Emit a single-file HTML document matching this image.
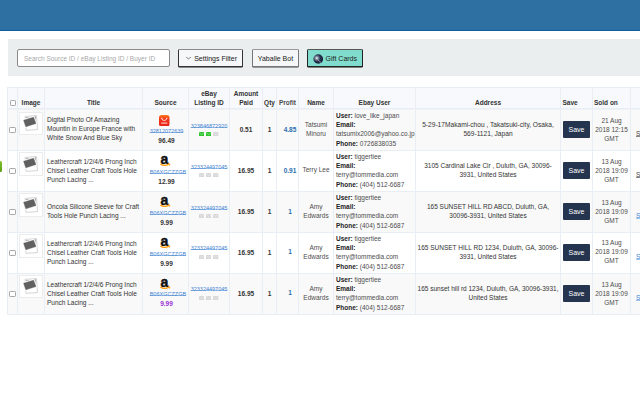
<!DOCTYPE html><html><head><meta charset="utf-8"><style>
*{margin:0;padding:0;box-sizing:border-box}
html,body{width:640px;height:400px;overflow:hidden;background:#fff;font-family:"Liberation Sans",sans-serif;color:#333}
.a{position:absolute}
.t{position:absolute;font-size:6.5px;line-height:9px;white-space:nowrap}
.b{font-weight:bold}
.g{color:#4d4d4d}
.lk{font-size:5.5px;color:#3f84d3;text-decoration:underline;text-decoration-color:#9fc2ea;text-decoration-skip-ink:none;text-underline-offset:-0.6px}
.hdr{position:absolute;left:0;top:0;width:640px;height:30.5px;background:#2e70a1;border-bottom:1px solid #0d5c9e}
.panel{position:absolute;left:8px;top:39.2px;width:640px;height:37.3px;background:#ebeeef}
.inp{position:absolute;left:17px;top:49px;width:152.5px;height:17.5px;border:1px solid #8a8a8a;border-radius:2px;background:#fff}
.btn{position:absolute;top:49.3px;height:17.3px;border:1px solid #333;border-radius:1.5px;background:#f6f7f8;font-size:7px;line-height:15px;text-align:center;color:#222;white-space:nowrap}
.cb{position:absolute;width:6.3px;height:5.5px;border:0.7px solid #a8a8a8;border-radius:1.2px;background:#fff}
.thumb{position:absolute;width:23.5px;height:23.7px;border:1px solid #ececec;background:#fff}
.save{position:absolute;left:563px;width:27px;height:17px;background:#26354f;border-radius:1px;color:#fff;font-size:7px;line-height:17px;text-align:center}
.env{position:absolute;width:5.3px;height:4.3px;border-radius:0.5px}
</style></head><body>
<div class="hdr"></div>
<div class="panel"></div>
<div class="inp"></div>
<div class="t " style="left:24px;top:53.5px;width:140px;text-align:left;color:#a8a8a8;">Search Source ID / eBay Listing ID / Buyer ID</div>
<div class="btn" style="left:178px;width:64.5px;border-top-color:#8a8a8a;box-shadow:0 0.6px 0 #222;"></div>
<svg class="a" style="left:185px;top:55px" width="7" height="5" viewBox="0 0 7 5"><polyline points="1.2,2.2 3.5,3.8 5.9,2.2" fill="none" stroke="#555" stroke-width="0.7"/></svg>
<div class="t " style="left:194.2px;top:53.5px;width:50px;text-align:left;font-size:7px;color:#222;">Settings Filter</div>
<div class="btn" style="left:251.5px;width:47px;border-color:#777;border-top-color:#999;box-shadow:0 0.6px 0 #444;background:#f5f6f7"></div>
<div class="t " style="left:257.8px;top:53.5px;width:40px;text-align:left;font-size:7px;color:#222;">Yaballe Bot</div>
<div class="btn" style="left:307px;width:56px;background:#80dccc;border-color:#222;border-top-color:#555;box-shadow:0 0.6px 0 #111;"></div>
<svg class="a" style="left:312.5px;top:53.5px" width="10.5" height="10" viewBox="0 0 21 20"><defs><radialGradient id="gc" cx="0.35" cy="0.4" r="0.6"><stop offset="0" stop-color="#ffffff"/><stop offset="0.25" stop-color="#8a93a6"/><stop offset="0.6" stop-color="#26324f"/><stop offset="1" stop-color="#1b2540"/></radialGradient></defs><ellipse cx="10.5" cy="10" rx="9.8" ry="9.3" fill="url(#gc)"/><path d="M9 11 L16 17" stroke="#e8e8e8" stroke-width="1.3" opacity="0.8"/></svg>
<div class="t " style="left:325.5px;top:53.5px;width:40px;text-align:left;font-size:7px;color:#222;">Gift Cards</div>
<div class="a" style="left:7.5px;top:87px;width:652.5px;height:21.5px;background:#f7f9fc"></div>
<div class="a" style="left:7.5px;top:108.5px;width:652.5px;height:42.0px;background:#f9f9f9"></div>
<div class="a" style="left:7.5px;top:150.5px;width:652.5px;height:41.0px;background:#ffffff"></div>
<div class="a" style="left:7.5px;top:191.5px;width:652.5px;height:41.0px;background:#f9f9f9"></div>
<div class="a" style="left:7.5px;top:232.5px;width:652.5px;height:40.5px;background:#ffffff"></div>
<div class="a" style="left:7.5px;top:273px;width:652.5px;height:41.80000000000001px;background:#f9f9f9"></div>
<div class="a" style="left:7.0px;top:87px;width:1px;height:227.8px;background:#e9edf4"></div>
<div class="a" style="left:17.0px;top:87px;width:1px;height:227.8px;background:#e9edf4"></div>
<div class="a" style="left:44.0px;top:87px;width:1px;height:227.8px;background:#e9edf4"></div>
<div class="a" style="left:142.0px;top:87px;width:1px;height:227.8px;background:#e9edf4"></div>
<div class="a" style="left:188.0px;top:87px;width:1px;height:227.8px;background:#e9edf4"></div>
<div class="a" style="left:229.0px;top:87px;width:1px;height:227.8px;background:#e9edf4"></div>
<div class="a" style="left:262.0px;top:87px;width:1px;height:227.8px;background:#e9edf4"></div>
<div class="a" style="left:276.0px;top:87px;width:1px;height:227.8px;background:#e9edf4"></div>
<div class="a" style="left:298.0px;top:87px;width:1px;height:227.8px;background:#e9edf4"></div>
<div class="a" style="left:333.0px;top:87px;width:1px;height:227.8px;background:#e9edf4"></div>
<div class="a" style="left:415.0px;top:87px;width:1px;height:227.8px;background:#e9edf4"></div>
<div class="a" style="left:560.0px;top:87px;width:1px;height:227.8px;background:#e9edf4"></div>
<div class="a" style="left:592.0px;top:87px;width:1px;height:227.8px;background:#e9edf4"></div>
<div class="a" style="left:630.0px;top:87px;width:1px;height:227.8px;background:#e9edf4"></div>
<div class="a" style="left:7.5px;top:109px;width:652.5px;height:1px;background:#eef1f6"></div>
<div class="a" style="left:7.5px;top:86.5px;width:652.5px;height:1px;background:#e9edf4"></div>
<div class="a" style="left:7.5px;top:108.0px;width:652.5px;height:1px;background:#e9edf4"></div>
<div class="a" style="left:7.5px;top:150.0px;width:652.5px;height:1px;background:#e9edf4"></div>
<div class="a" style="left:7.5px;top:191.0px;width:652.5px;height:1px;background:#e9edf4"></div>
<div class="a" style="left:7.5px;top:232.0px;width:652.5px;height:1px;background:#e9edf4"></div>
<div class="a" style="left:7.5px;top:272.5px;width:652.5px;height:1px;background:#e9edf4"></div>
<div class="a" style="left:7.5px;top:314.3px;width:652.5px;height:1px;background:#e9edf4"></div>
<div class="cb" style="left:9.5px;top:100px"></div>
<div class="t b" style="left:17.5px;top:98.3px;width:27.0px;text-align:center;">Image</div>
<div class="t b" style="left:44.5px;top:98.3px;width:98.0px;text-align:center;">Title</div>
<div class="t b" style="left:142.5px;top:98.3px;width:46.0px;text-align:center;">Source</div>
<div class="t b" style="left:188.5px;top:89.3px;width:41.0px;text-align:center;">eBay<br>Listing ID</div>
<div class="t b" style="left:229.5px;top:89.3px;width:33.0px;text-align:center;">Amount<br>Paid</div>
<div class="t b" style="left:262.5px;top:98.3px;width:14.0px;text-align:center;">Qty</div>
<div class="t b g" style="left:276.5px;top:98.3px;width:22.0px;text-align:center;">Profit</div>
<div class="t b" style="left:298.5px;top:98.3px;width:35.0px;text-align:center;">Name</div>
<div class="t b" style="left:333.5px;top:98.3px;width:82.0px;text-align:center;">Ebay User</div>
<div class="t b" style="left:415.5px;top:98.3px;width:145.0px;text-align:center;">Address</div>
<div class="t b" style="left:562.5px;top:98.3px;width:30px;text-align:left;">Save</div>
<div class="t b" style="left:594.0px;top:98.3px;width:40px;text-align:left;">Sold on</div>
<div class="cb" style="left:9.3px;top:127.4px"></div>
<div class="thumb" style="left:19px;top:111.8px"></div><svg class="a" style="left:20px;top:112.05px" width="22" height="22" viewBox="0 0 22 22"><g transform="rotate(-4 11 11)"><rect x="5.5" y="4" width="11.5" height="14" fill="#fff" stroke="#c4c4c4" stroke-width="0.7"/><rect x="6.3" y="4.8" width="10" height="2" fill="#9a9a9a"/><rect x="15" y="4.8" width="1.3" height="7" fill="#aaa"/></g><polygon points="3.6,8.25 13.5,5.2 16,11.5 5.8,14.85" fill="#fff" stroke="#fff" stroke-width="2.4" stroke-linejoin="round"/><polygon points="3.6,8.25 13.5,5.2 16,11.5 5.8,14.85" fill="#606060" stroke="#555" stroke-width="0.4" stroke-linejoin="round"/></svg>
<div class="t " style="left:47.0px;top:115.4px;width:98px;text-align:left;">Digital Photo Of Amazing<br>Mountin in Europe France with<br>White Snow And Blue Sky</div>
<svg class="a" style="left:159.2px;top:114.5px" width="10.5" height="11.5" viewBox="0 0 21 23"><defs><linearGradient id="ag" x1="0" y1="0" x2="0" y2="1"><stop offset="0" stop-color="#ff7a1a"/><stop offset="0.35" stop-color="#f2361c"/><stop offset="1" stop-color="#e8231a"/></linearGradient></defs><rect x="0" y="0" width="21" height="23" rx="5" fill="url(#ag)"/><path d="M5.5 6.5 Q6 11 10.5 11 Q15 11 15.5 6.5" fill="none" stroke="#fff" stroke-width="1.6"/><circle cx="5.5" cy="6.5" r="1.1" fill="#fff"/><circle cx="15.5" cy="6.5" r="1.1" fill="#fff"/><rect x="4.5" y="15" width="12" height="2.4" fill="#fff" opacity="0.7"/></svg>
<div class="t lk" style="left:143.5px;top:127.0px;width:46.0px;text-align:center;">32812072639</div>
<div class="t b" style="left:143.5px;top:135.5px;width:46.0px;text-align:center;">96.49</div>
<div class="t lk" style="left:188.5px;top:121.5px;width:41.0px;text-align:center;">323846872920</div>
<svg class="a" style="left:198.8px;top:132.0px" width="5.4" height="4.4" viewBox="0 0 54 44"><rect width="54" height="44" rx="4" fill="#2fc52f"/><path d="M5 8 L27 26 L49 8" fill="none" stroke="#fff" stroke-opacity="0.75" stroke-width="5"/></svg>
<svg class="a" style="left:206.0px;top:132.0px" width="5.4" height="4.4" viewBox="0 0 54 44"><rect width="54" height="44" rx="4" fill="#2fc52f"/><path d="M5 8 L27 26 L49 8" fill="none" stroke="#fff" stroke-opacity="0.75" stroke-width="5"/></svg>
<svg class="a" style="left:213.20000000000002px;top:132.0px" width="5.4" height="4.4" viewBox="0 0 54 44"><rect width="54" height="44" rx="4" fill="#d8d8d8"/><path d="M5 8 L27 26 L49 8" fill="none" stroke="#fff" stroke-opacity="0.75" stroke-width="5"/></svg>
<div class="t b" style="left:229.5px;top:125.0px;width:33.0px;text-align:center;">0.51</div>
<div class="t b" style="left:262.5px;top:125.0px;width:14.0px;text-align:center;">1</div>
<div class="t b" style="left:279.0px;top:124.5px;width:22.0px;text-align:center;color:#2a6eae;">4.85</div>
<div class="t g" style="left:298.5px;top:119.9px;width:35.0px;text-align:center;">Tatsumi<br>Minoru</div>
<div class="t " style="left:336.0px;top:110.9px;width:80px;text-align:left;"><div style="line-height:9.3px"><b style="color:#222">User:</b> <span class="g">love_like_japan</span><br><b style="color:#222">Email:</b><br><span class="g">tatsumix2006@yahoo.co.jp</span><br><b style="color:#222">Phone:</b> <span class="g">0726838035</span></div></div>
<div class="t " style="left:415.5px;top:119.8px;width:145.0px;text-align:center;font-size:6.62px;">5-29-17Makami-chou , Takatsuki-city, Osaka,<br>569-1121, Japan</div>
<div class="save" style="top:121.0px">Save</div>
<div class="t g" style="left:592.5px;top:115.7px;width:38.0px;text-align:center;">21 Aug<br>2018 12:15<br>GMT</div>
<div class="t lk" style="left:636.0px;top:129.4px;width:20px;text-align:left;color:#444;text-decoration-color:#888;font-size:6.5px;text-underline-offset:0.3px;">See</div>
<div class="cb" style="left:9.3px;top:168.4px"></div>
<div class="thumb" style="left:19px;top:152.3px"></div><svg class="a" style="left:20px;top:152.55px" width="22" height="22" viewBox="0 0 22 22"><g transform="rotate(-4 11 11)"><rect x="5.5" y="4" width="11.5" height="14" fill="#fff" stroke="#c4c4c4" stroke-width="0.7"/><rect x="6.3" y="4.8" width="10" height="2" fill="#9a9a9a"/><rect x="15" y="4.8" width="1.3" height="7" fill="#aaa"/></g><polygon points="3.6,8.25 13.5,5.2 16,11.5 5.8,14.85" fill="#fff" stroke="#fff" stroke-width="2.4" stroke-linejoin="round"/><polygon points="3.6,8.25 13.5,5.2 16,11.5 5.8,14.85" fill="#606060" stroke="#555" stroke-width="0.4" stroke-linejoin="round"/></svg>
<div class="t " style="left:47.0px;top:157.2px;width:98px;text-align:left;">Leathercraft 1/2/4/6 Prong Inch<br>Chisel Leather Craft Tools Hole<br>Punch Lacing ...</div>
<svg class="a" style="left:158px;top:154.1px" width="14" height="14" viewBox="0 0 14 14"><text x="6.3" y="10.2" text-anchor="middle" font-family="Liberation Sans" font-weight="bold" font-size="14" fill="#111" stroke="#111" stroke-width="0.5">a</text><path d="M2.3 10.2 Q6.5 12.6 11 10.3" fill="none" stroke="#f90" stroke-width="1.2"/><path d="M10 9.6 L11.8 10 L11.5 11.6" fill="none" stroke="#f90" stroke-width="0.9"/></svg>
<div class="t lk" style="left:144.9px;top:167.5px;width:46.0px;text-align:center;">B06XGCZZGB</div>
<div class="t b" style="left:143.5px;top:176.5px;width:46.0px;text-align:center;">12.99</div>
<div class="t lk" style="left:188.5px;top:162.5px;width:41.0px;text-align:center;">323324497045</div>
<svg class="a" style="left:198.8px;top:173.0px" width="5.4" height="4.4" viewBox="0 0 54 44"><rect width="54" height="44" rx="4" fill="#d8d8d8"/><path d="M5 8 L27 26 L49 8" fill="none" stroke="#fff" stroke-opacity="0.75" stroke-width="5"/></svg>
<svg class="a" style="left:206.0px;top:173.0px" width="5.4" height="4.4" viewBox="0 0 54 44"><rect width="54" height="44" rx="4" fill="#d8d8d8"/><path d="M5 8 L27 26 L49 8" fill="none" stroke="#fff" stroke-opacity="0.75" stroke-width="5"/></svg>
<svg class="a" style="left:213.20000000000002px;top:173.0px" width="5.4" height="4.4" viewBox="0 0 54 44"><rect width="54" height="44" rx="4" fill="#d8d8d8"/><path d="M5 8 L27 26 L49 8" fill="none" stroke="#fff" stroke-opacity="0.75" stroke-width="5"/></svg>
<div class="t b" style="left:229.5px;top:166.0px;width:33.0px;text-align:center;">16.95</div>
<div class="t b" style="left:262.5px;top:166.0px;width:14.0px;text-align:center;">1</div>
<div class="t b" style="left:279.0px;top:165.5px;width:22.0px;text-align:center;color:#2a6eae;">0.91</div>
<div class="t g" style="left:298.5px;top:165.4px;width:35.0px;text-align:center;">Terry Lee</div>
<div class="t " style="left:336.0px;top:151.9px;width:80px;text-align:left;"><div style="line-height:9.3px"><b style="color:#222">User:</b> <span class="g">tiggertiee</span><br><b style="color:#222">Email:</b><br><span class="g">terry@tommedia.com</span><br><b style="color:#222">Phone:</b> <span class="g">(404) 512-6687</span></div></div>
<div class="t " style="left:415.5px;top:160.8px;width:145.0px;text-align:center;font-size:6.5px;">3105 Cardinal Lake Cir , Duluth, GA, 30096-<br>3931, United States</div>
<div class="save" style="top:162.0px">Save</div>
<div class="t g" style="left:592.5px;top:156.7px;width:38.0px;text-align:center;">13 Aug<br>2018 19:09<br>GMT</div>
<div class="t lk" style="left:636.0px;top:170.4px;width:20px;text-align:left;color:#444;text-decoration-color:#888;font-size:6.5px;text-underline-offset:0.3px;">See</div>
<div class="cb" style="left:9.3px;top:209.4px"></div>
<div class="thumb" style="left:19px;top:193.3px"></div><svg class="a" style="left:20px;top:193.55px" width="22" height="22" viewBox="0 0 22 22"><g transform="rotate(-4 11 11)"><rect x="5.5" y="4" width="11.5" height="14" fill="#fff" stroke="#c4c4c4" stroke-width="0.7"/><rect x="6.3" y="4.8" width="10" height="2" fill="#9a9a9a"/><rect x="15" y="4.8" width="1.3" height="7" fill="#aaa"/></g><polygon points="3.6,8.25 13.5,5.2 16,11.5 5.8,14.85" fill="#fff" stroke="#fff" stroke-width="2.4" stroke-linejoin="round"/><polygon points="3.6,8.25 13.5,5.2 16,11.5 5.8,14.85" fill="#606060" stroke="#555" stroke-width="0.4" stroke-linejoin="round"/></svg>
<div class="t " style="left:47.0px;top:201.9px;width:98px;text-align:left;">Oncola Silicone Sleeve for Craft<br>Tools Hole Punch Lacing ...</div>
<svg class="a" style="left:158px;top:195.1px" width="14" height="14" viewBox="0 0 14 14"><text x="6.3" y="10.2" text-anchor="middle" font-family="Liberation Sans" font-weight="bold" font-size="14" fill="#111" stroke="#111" stroke-width="0.5">a</text><path d="M2.3 10.2 Q6.5 12.6 11 10.3" fill="none" stroke="#f90" stroke-width="1.2"/><path d="M10 9.6 L11.8 10 L11.5 11.6" fill="none" stroke="#f90" stroke-width="0.9"/></svg>
<div class="t lk" style="left:144.9px;top:208.5px;width:46.0px;text-align:center;">B06XGCZZGB</div>
<div class="t b" style="left:143.5px;top:217.5px;width:46.0px;text-align:center;">9.99</div>
<div class="t lk" style="left:188.5px;top:203.5px;width:41.0px;text-align:center;">323324497045</div>
<svg class="a" style="left:198.8px;top:214.0px" width="5.4" height="4.4" viewBox="0 0 54 44"><rect width="54" height="44" rx="4" fill="#d8d8d8"/><path d="M5 8 L27 26 L49 8" fill="none" stroke="#fff" stroke-opacity="0.75" stroke-width="5"/></svg>
<svg class="a" style="left:206.0px;top:214.0px" width="5.4" height="4.4" viewBox="0 0 54 44"><rect width="54" height="44" rx="4" fill="#d8d8d8"/><path d="M5 8 L27 26 L49 8" fill="none" stroke="#fff" stroke-opacity="0.75" stroke-width="5"/></svg>
<svg class="a" style="left:213.20000000000002px;top:214.0px" width="5.4" height="4.4" viewBox="0 0 54 44"><rect width="54" height="44" rx="4" fill="#d8d8d8"/><path d="M5 8 L27 26 L49 8" fill="none" stroke="#fff" stroke-opacity="0.75" stroke-width="5"/></svg>
<div class="t b" style="left:229.5px;top:207.0px;width:33.0px;text-align:center;">16.95</div>
<div class="t b" style="left:262.5px;top:207.0px;width:14.0px;text-align:center;">1</div>
<div class="t b" style="left:279.0px;top:206.5px;width:22.0px;text-align:center;color:#2a6eae;">1</div>
<div class="t g" style="left:298.5px;top:201.9px;width:35.0px;text-align:center;">Amy<br>Edwards</div>
<div class="t " style="left:336.0px;top:192.9px;width:80px;text-align:left;"><div style="line-height:9.3px"><b style="color:#222">User:</b> <span class="g">tiggertiee</span><br><b style="color:#222">Email:</b><br><span class="g">terry@tommedia.com</span><br><b style="color:#222">Phone:</b> <span class="g">(404) 512-6687</span></div></div>
<div class="t " style="left:415.5px;top:201.8px;width:145.0px;text-align:center;font-size:6.5px;">165 SUNSET HILL RD ABCD, Duluth, GA,<br>30096-3931, United States</div>
<div class="save" style="top:203.0px">Save</div>
<div class="t g" style="left:592.5px;top:197.7px;width:38.0px;text-align:center;">13 Aug<br>2018 19:09<br>GMT</div>
<div class="t lk" style="left:636.0px;top:211.4px;width:20px;text-align:left;font-size:6.5px;text-underline-offset:0.3px;">See</div>
<div class="cb" style="left:9.3px;top:250.15px"></div>
<div class="thumb" style="left:19px;top:234.3px"></div><svg class="a" style="left:20px;top:234.55px" width="22" height="22" viewBox="0 0 22 22"><g transform="rotate(-4 11 11)"><rect x="5.5" y="4" width="11.5" height="14" fill="#fff" stroke="#c4c4c4" stroke-width="0.7"/><rect x="6.3" y="4.8" width="10" height="2" fill="#9a9a9a"/><rect x="15" y="4.8" width="1.3" height="7" fill="#aaa"/></g><polygon points="3.6,8.25 13.5,5.2 16,11.5 5.8,14.85" fill="#fff" stroke="#fff" stroke-width="2.4" stroke-linejoin="round"/><polygon points="3.6,8.25 13.5,5.2 16,11.5 5.8,14.85" fill="#606060" stroke="#555" stroke-width="0.4" stroke-linejoin="round"/></svg>
<div class="t " style="left:47.0px;top:238.95px;width:98px;text-align:left;">Leathercraft 1/2/4/6 Prong Inch<br>Chisel Leather Craft Tools Hole<br>Punch Lacing ...</div>
<svg class="a" style="left:158px;top:236.1px" width="14" height="14" viewBox="0 0 14 14"><text x="6.3" y="10.2" text-anchor="middle" font-family="Liberation Sans" font-weight="bold" font-size="14" fill="#111" stroke="#111" stroke-width="0.5">a</text><path d="M2.3 10.2 Q6.5 12.6 11 10.3" fill="none" stroke="#f90" stroke-width="1.2"/><path d="M10 9.6 L11.8 10 L11.5 11.6" fill="none" stroke="#f90" stroke-width="0.9"/></svg>
<div class="t lk" style="left:144.9px;top:249.5px;width:46.0px;text-align:center;">B06XGCZZGB</div>
<div class="t b" style="left:143.5px;top:258.5px;width:46.0px;text-align:center;">9.99</div>
<div class="t lk" style="left:188.5px;top:244.25px;width:41.0px;text-align:center;">323324497045</div>
<svg class="a" style="left:198.8px;top:254.75px" width="5.4" height="4.4" viewBox="0 0 54 44"><rect width="54" height="44" rx="4" fill="#d8d8d8"/><path d="M5 8 L27 26 L49 8" fill="none" stroke="#fff" stroke-opacity="0.75" stroke-width="5"/></svg>
<svg class="a" style="left:206.0px;top:254.75px" width="5.4" height="4.4" viewBox="0 0 54 44"><rect width="54" height="44" rx="4" fill="#d8d8d8"/><path d="M5 8 L27 26 L49 8" fill="none" stroke="#fff" stroke-opacity="0.75" stroke-width="5"/></svg>
<svg class="a" style="left:213.20000000000002px;top:254.75px" width="5.4" height="4.4" viewBox="0 0 54 44"><rect width="54" height="44" rx="4" fill="#d8d8d8"/><path d="M5 8 L27 26 L49 8" fill="none" stroke="#fff" stroke-opacity="0.75" stroke-width="5"/></svg>
<div class="t b" style="left:229.5px;top:247.75px;width:33.0px;text-align:center;">16.95</div>
<div class="t b" style="left:262.5px;top:247.75px;width:14.0px;text-align:center;">1</div>
<div class="t b" style="left:279.0px;top:247.25px;width:22.0px;text-align:center;color:#2a6eae;">1</div>
<div class="t g" style="left:298.5px;top:242.65px;width:35.0px;text-align:center;">Amy<br>Edwards</div>
<div class="t " style="left:336.0px;top:233.65px;width:80px;text-align:left;"><div style="line-height:9.3px"><b style="color:#222">User:</b> <span class="g">tiggertiee</span><br><b style="color:#222">Email:</b><br><span class="g">terry@tommedia.com</span><br><b style="color:#222">Phone:</b> <span class="g">(404) 512-6687</span></div></div>
<div class="t " style="left:415.5px;top:242.55px;width:145.0px;text-align:center;font-size:6.5px;">165 SUNSET HILL RD 1234, Duluth, GA, 30096-<br>3931, United States</div>
<div class="save" style="top:243.75px">Save</div>
<div class="t g" style="left:592.5px;top:238.45px;width:38.0px;text-align:center;">13 Aug<br>2018 19:09<br>GMT</div>
<div class="t lk" style="left:636.0px;top:252.15px;width:20px;text-align:left;font-size:6.5px;text-underline-offset:0.3px;">See</div>
<div class="cb" style="left:9.3px;top:291.29999999999995px"></div>
<div class="thumb" style="left:19px;top:274.8px"></div><svg class="a" style="left:20px;top:275.05px" width="22" height="22" viewBox="0 0 22 22"><g transform="rotate(-4 11 11)"><rect x="5.5" y="4" width="11.5" height="14" fill="#fff" stroke="#c4c4c4" stroke-width="0.7"/><rect x="6.3" y="4.8" width="10" height="2" fill="#9a9a9a"/><rect x="15" y="4.8" width="1.3" height="7" fill="#aaa"/></g><polygon points="3.6,8.25 13.5,5.2 16,11.5 5.8,14.85" fill="#fff" stroke="#fff" stroke-width="2.4" stroke-linejoin="round"/><polygon points="3.6,8.25 13.5,5.2 16,11.5 5.8,14.85" fill="#606060" stroke="#555" stroke-width="0.4" stroke-linejoin="round"/></svg>
<div class="t " style="left:47.0px;top:280.09999999999997px;width:98px;text-align:left;">Leathercraft 1/2/4/6 Prong Inch<br>Chisel Leather Craft Tools Hole<br>Punch Lacing ...</div>
<svg class="a" style="left:158px;top:276.6px" width="14" height="14" viewBox="0 0 14 14"><text x="6.3" y="10.2" text-anchor="middle" font-family="Liberation Sans" font-weight="bold" font-size="14" fill="#111" stroke="#111" stroke-width="0.5">a</text><path d="M2.3 10.2 Q6.5 12.6 11 10.3" fill="none" stroke="#f90" stroke-width="1.2"/><path d="M10 9.6 L11.8 10 L11.5 11.6" fill="none" stroke="#f90" stroke-width="0.9"/></svg>
<div class="t lk" style="left:144.9px;top:290px;width:46.0px;text-align:center;">B06XGCZZGB</div>
<div class="t b" style="left:143.5px;top:299px;width:46.0px;text-align:center;color:#9b30d9;">9.99</div>
<div class="t lk" style="left:188.5px;top:285.4px;width:41.0px;text-align:center;">323324497045</div>
<svg class="a" style="left:198.8px;top:295.9px" width="5.4" height="4.4" viewBox="0 0 54 44"><rect width="54" height="44" rx="4" fill="#d8d8d8"/><path d="M5 8 L27 26 L49 8" fill="none" stroke="#fff" stroke-opacity="0.75" stroke-width="5"/></svg>
<svg class="a" style="left:206.0px;top:295.9px" width="5.4" height="4.4" viewBox="0 0 54 44"><rect width="54" height="44" rx="4" fill="#d8d8d8"/><path d="M5 8 L27 26 L49 8" fill="none" stroke="#fff" stroke-opacity="0.75" stroke-width="5"/></svg>
<svg class="a" style="left:213.20000000000002px;top:295.9px" width="5.4" height="4.4" viewBox="0 0 54 44"><rect width="54" height="44" rx="4" fill="#d8d8d8"/><path d="M5 8 L27 26 L49 8" fill="none" stroke="#fff" stroke-opacity="0.75" stroke-width="5"/></svg>
<div class="t b" style="left:229.5px;top:288.9px;width:33.0px;text-align:center;">16.95</div>
<div class="t b" style="left:262.5px;top:288.9px;width:14.0px;text-align:center;">1</div>
<div class="t b" style="left:279.0px;top:288.4px;width:22.0px;text-align:center;color:#2a6eae;">1</div>
<div class="t g" style="left:298.5px;top:283.79999999999995px;width:35.0px;text-align:center;">Amy<br>Edwards</div>
<div class="t " style="left:336.0px;top:274.79999999999995px;width:80px;text-align:left;"><div style="line-height:9.3px"><b style="color:#222">User:</b> <span class="g">tiggertiee</span><br><b style="color:#222">Email:</b><br><span class="g">terry@tommedia.com</span><br><b style="color:#222">Phone:</b> <span class="g">(404) 512-6687</span></div></div>
<div class="t " style="left:415.5px;top:283.7px;width:145.0px;text-align:center;font-size:6.5px;">165 sunset hill rd 1234, Duluth, GA, 30096-3931,<br>United States</div>
<div class="save" style="top:284.9px">Save</div>
<div class="t g" style="left:592.5px;top:279.59999999999997px;width:38.0px;text-align:center;">13 Aug<br>2018 19:09<br>GMT</div>
<div class="t lk" style="left:636.0px;top:293.29999999999995px;width:20px;text-align:left;font-size:6.5px;text-underline-offset:0.3px;">See</div>
<div class="a" style="left:0;top:161.3px;width:2.2px;height:10.8px;background:linear-gradient(#82c42a,#5c9e14);border-radius:0 1.5px 1.5px 0"></div>
</body></html>
